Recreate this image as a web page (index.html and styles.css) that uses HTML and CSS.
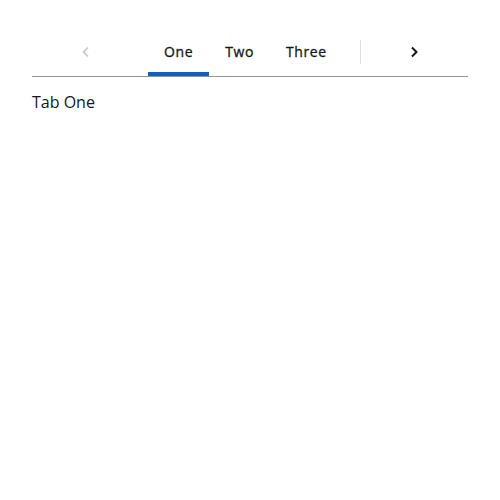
FILE: index.html
```html
<!DOCTYPE html>
<html>
<head>
<meta charset="utf-8">
<link rel="stylesheet" href="styles.css">
</head>
<body>
<div class="tabs">
  <button class="arrow arrow-left" disabled>
    <svg width="20" height="20" viewBox="0 0 20 20"><path d="M12 5.5 7.5 10l4.5 4.5" fill="none" stroke="currentColor" stroke-width="1.6"/></svg>
  </button>
  <div class="tab-list">
    <div class="tab active">One</div>
    <div class="tab">Two</div>
    <div class="tab">Three</div>
  </div>
  <button class="arrow arrow-right">
    <svg width="20" height="20" viewBox="0 0 20 20"><path d="M8 5.5 12.5 10 8 14.5" fill="none" stroke="currentColor" stroke-width="2"/></svg>
  </button>
</div>
<div class="panel">Tab One</div>
</body>
</html>
```
FILE: styles.css
```css
html, body {
  margin: 0;
  background: #fff;
}
body {
  padding: 28px 32px;
  font-family: "Open Sans", "Liberation Sans", sans-serif;
  color: #161616;
}
.tabs {
  display: flex;
  height: 48px;
  border-bottom: 1px solid #8d939c;
}
.arrow {
  width: 108px;
  flex: none;
  background: none;
  border: none;
  padding: 0;
  display: flex;
  align-items: center;
  justify-content: center;
  color: #161616;
}
.arrow-left {
  color: #c6c6c6;
}
.arrow-right {
  position: relative;
}
.arrow-right::before {
  content: "";
  position: absolute;
  left: 0;
  top: 12px;
  height: 24px;
  border-left: 1px solid #e0e0e0;
}
.tab-list {
  flex: 1;
  display: flex;
  padding-left: 8px;
}
.tab {
  position: relative;
  padding: 0 16px 2px;
  display: flex;
  align-items: center;
  font-size: 14px;
  font-weight: 400;
  letter-spacing: 0.6px;
  -webkit-text-stroke: 0.3px currentColor;
}
.tab.active::after {
  content: "";
  position: absolute;
  left: 0;
  right: 0;
  bottom: 0;
  height: 4px;
  background: #185bc3;
}
.panel {
  margin-top: 13px;
  font-size: 16px;
  line-height: 24px;
}
```
